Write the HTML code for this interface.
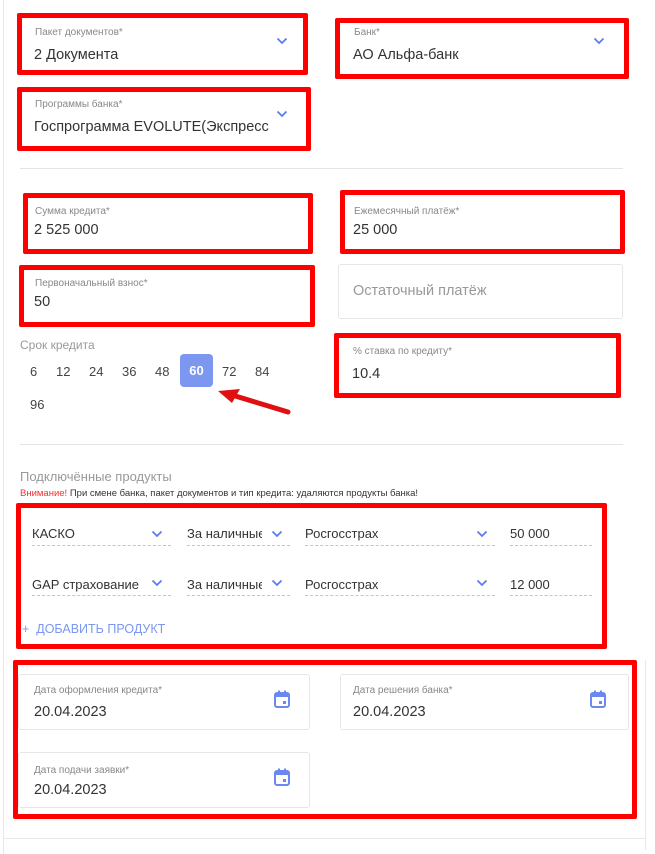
<!DOCTYPE html>
<html><head><meta charset="utf-8"><style>
body{margin:0;width:655px;height:854px;background:#fff;position:relative;overflow:hidden;font-family:"Liberation Sans","DejaVu Sans",sans-serif;color:#333}
.a{position:absolute}
.r{position:absolute;border:5px solid #f00;box-sizing:border-box;border-radius:2px}
.in{position:absolute;border:1px solid #e6e6e6;border-radius:3px;box-sizing:border-box}
.lb{position:absolute;font-size:10px;color:#888}
.v{position:absolute;font-size:14.5px;color:#333;white-space:nowrap}
.sep{position:absolute;height:1px;background:#e4e4e4;left:20px;width:603px}
.chev{position:absolute;width:12px;height:8px}
.n{position:absolute;font-size:13px;color:#444}
.dl{position:absolute;border-bottom:1px dashed #b8c4ee;height:0}
.cal{position:absolute;width:16px;height:18px}
</style></head><body>
<div class="a" style="left:3px;top:0;width:1px;height:854px;background:#e8e8e8"></div>
<div class="a" style="left:3px;top:838px;width:642px;height:1px;background:#e8e8e8"></div>
<div class="a" style="left:645px;top:660px;width:1px;height:190px;background:#e8e8e8"></div>

<svg width="0" height="0" style="position:absolute"><defs>
<symbol id="ch" viewBox="0 0 12 8"><path d="M1.5 1.5 L6 6 L10.5 1.5" fill="none" stroke="#5b7cf0" stroke-width="1.8"/></symbol>
<symbol id="cl" viewBox="0 0 16 18"><rect x="1" y="3" width="14" height="14" rx="2" fill="none" stroke="#6b88f0" stroke-width="2"/><rect x="1" y="3" width="14" height="4" fill="#6b88f0"/><rect x="4" y="0.5" width="2" height="3" fill="#6b88f0"/><rect x="10" y="0.5" width="2" height="3" fill="#6b88f0"/><rect x="9" y="11" width="3" height="3" fill="#6b88f0"/></symbol>
</defs></svg>

<div class="r" style="left:17px;top:13px;width:291px;height:62px"></div>
<div class="lb" style="left:35px;top:27px">Пакет документов*</div>
<div class="v" style="left:34px;top:47px">2 Документа</div>
<svg class="chev" style="left:276px;top:37px"><use href="#ch"/></svg>

<div class="r" style="left:335px;top:18px;width:294px;height:61px"></div>
<div class="lb" style="left:354px;top:27px">Банк*</div>
<div class="v" style="left:353px;top:47px">АО Альфа-банк</div>
<svg class="chev" style="left:593px;top:37px"><use href="#ch"/></svg>

<div class="r" style="left:17px;top:87px;width:294px;height:64px"></div>
<div class="lb" style="left:35px;top:99px">Программы банка*</div>
<div class="v" style="left:34px;top:119px;width:235px;overflow:hidden">Госпрограмма EVOLUTE(Экспресс</div>
<svg class="chev" style="left:276px;top:110px"><use href="#ch"/></svg>

<div class="sep" style="top:168px"></div>

<div class="r" style="left:23px;top:193px;width:290px;height:61px"></div>
<div class="lb" style="left:35px;top:206px">Сумма кредита*</div>
<div class="v" style="left:34px;top:222px">2 525 000</div>

<div class="r" style="left:340px;top:190px;width:285px;height:64px"></div>
<div class="lb" style="left:354px;top:206px">Ежемесячный платёж*</div>
<div class="v" style="left:353px;top:222px">25 000</div>

<div class="r" style="left:19px;top:265px;width:296px;height:62px"></div>
<div class="lb" style="left:35px;top:278px">Первоначальный взнос*</div>
<div class="v" style="left:34px;top:294px">50</div>

<div class="in" style="left:338px;top:264px;width:285px;height:55px"></div>
<div class="v" style="left:353px;top:283px;color:#999">Остаточный платёж</div>

<div class="a" style="left:20px;top:338px;font-size:12px;color:#999">Срок кредита</div>
<div class="n" style="left:30px;top:364px">6</div>
<div class="n" style="left:56px;top:364px">12</div>
<div class="n" style="left:89px;top:364px">24</div>
<div class="n" style="left:122px;top:364px">36</div>
<div class="n" style="left:155px;top:364px">48</div>
<div class="a" style="left:180px;top:354px;width:33px;height:33px;background:#7b97f0;border-radius:4px;color:#fff;font-size:13px;font-weight:bold;text-align:center;line-height:33px">60</div>
<div class="n" style="left:222px;top:364px">72</div>
<div class="n" style="left:255px;top:364px">84</div>
<div class="n" style="left:30px;top:397px">96</div>
<svg class="a" style="left:210px;top:385px" width="90" height="35"><path d="M78 27 L22 10" stroke="#e01010" stroke-width="5" stroke-linecap="round"/><path d="M8 6 L30 4 L22 18 Z" fill="#e01010"/></svg>

<div class="r" style="left:334px;top:333px;width:287px;height:65px"></div>
<div class="lb" style="left:353px;top:346px">% ставка по кредиту*</div>
<div class="v" style="left:352px;top:366px">10.4</div>

<div class="sep" style="top:444px"></div>
<div class="a" style="left:20px;top:469px;font-size:13px;color:#999">Подключённые продукты</div>
<div class="a" style="left:20px;top:488px;font-size:9.5px;color:#333;white-space:nowrap"><span style="color:#f03030">Внимание!</span> При смене банка, пакет документов и тип кредита: удаляются продукты банка!</div>

<div class="r" style="left:16px;top:503px;width:591px;height:146px"></div>
<div class="v" style="left:32px;top:526px;font-size:13px">КАСКО</div>
<svg class="chev" style="left:151px;top:530px"><use href="#ch"/></svg>
<div class="dl" style="left:32px;top:545px;width:139px"></div>
<div class="v" style="left:187px;top:526px;font-size:13px;width:75px;overflow:hidden">За наличные</div>
<svg class="chev" style="left:271px;top:530px"><use href="#ch"/></svg>
<div class="dl" style="left:187px;top:545px;width:103px"></div>
<div class="v" style="left:305px;top:526px;font-size:13px">Росгосстрах</div>
<svg class="chev" style="left:476px;top:530px"><use href="#ch"/></svg>
<div class="dl" style="left:305px;top:545px;width:190px"></div>
<div class="v" style="left:510px;top:526px;font-size:13px">50 000</div>
<div class="dl" style="left:510px;top:545px;width:82px"></div>

<div class="v" style="left:32px;top:577px;font-size:13px;width:110px;overflow:hidden">GAP страхование</div>
<svg class="chev" style="left:151px;top:579px"><use href="#ch"/></svg>
<div class="dl" style="left:32px;top:595px;width:139px"></div>
<div class="v" style="left:187px;top:577px;font-size:13px;width:75px;overflow:hidden">За наличные</div>
<svg class="chev" style="left:271px;top:579px"><use href="#ch"/></svg>
<div class="dl" style="left:187px;top:595px;width:103px"></div>
<div class="v" style="left:305px;top:577px;font-size:13px">Росгосстрах</div>
<svg class="chev" style="left:476px;top:579px"><use href="#ch"/></svg>
<div class="dl" style="left:305px;top:595px;width:190px"></div>
<div class="v" style="left:510px;top:577px;font-size:13px">12 000</div>
<div class="dl" style="left:510px;top:595px;width:82px"></div>

<div class="a" style="left:22px;top:622px;font-size:12.5px;color:#7b97f0;white-space:nowrap">+&nbsp; ДОБАВИТЬ ПРОДУКТ</div>

<div class="r" style="left:13px;top:660px;width:624px;height:159px"></div>
<div class="in" style="left:18px;top:674px;width:292px;height:56px"></div>
<div class="lb" style="left:34px;top:685px">Дата оформления кредита*</div>
<div class="v" style="left:34px;top:704px">20.04.2023</div>
<svg class="cal" style="left:274px;top:690px"><use href="#cl"/></svg>

<div class="in" style="left:340px;top:674px;width:289px;height:56px"></div>
<div class="lb" style="left:353px;top:685px">Дата решения банка*</div>
<div class="v" style="left:353px;top:704px">20.04.2023</div>
<svg class="cal" style="left:590px;top:690px"><use href="#cl"/></svg>

<div class="in" style="left:18px;top:752px;width:292px;height:56px"></div>
<div class="lb" style="left:34px;top:765px">Дата подачи заявки*</div>
<div class="v" style="left:34px;top:782px">20.04.2023</div>
<svg class="cal" style="left:274px;top:768px"><use href="#cl"/></svg>
</body></html>
